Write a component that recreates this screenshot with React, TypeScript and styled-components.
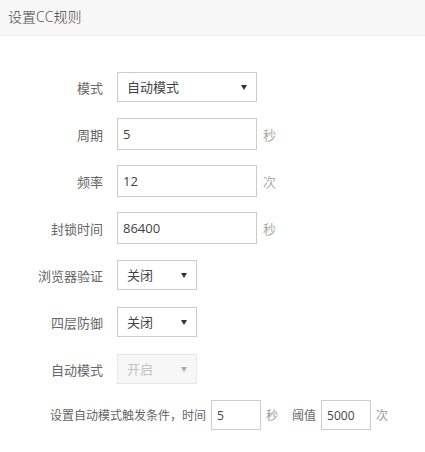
import { createGlobalStyle } from "styled-components";
import styled from "styled-components";

const GlobalStyle = createGlobalStyle`
  html, body {
    margin: 0;
    padding: 0;
    background: #fff;
  }
  body {
    font-family: "Open Sans", "Noto Sans CJK SC", sans-serif;
    color: #333;
  }
  * {
    box-sizing: border-box;
  }
`;

type Field =
  | { kind: "select"; label: string; value: string; wide?: boolean; disabled?: boolean }
  | { kind: "input"; label: string; value: string; unit: string };

const fields: Field[] = [
  { kind: "select", label: "模式", value: "自动模式", wide: true },
  { kind: "input", label: "周期", value: "5", unit: "秒" },
  { kind: "input", label: "频率", value: "12", unit: "次" },
  { kind: "input", label: "封锁时间", value: "86400", unit: "秒" },
  { kind: "select", label: "浏览器验证", value: "关闭" },
  { kind: "select", label: "四层防御", value: "关闭" },
  { kind: "select", label: "自动模式", value: "开启", disabled: true },
];

export default function App() {
  return (
    <Page>
      <GlobalStyle />
      <Header>
        <HeaderTitle>设置CC规则</HeaderTitle>
      </Header>

      <Form>
        {fields.map((f) => (
          <Row key={f.label}>
            <Label>{f.label}</Label>
            {f.kind === "select" ? (
              <SelectWrap $wide={f.wide}>
                <Select defaultValue={f.value} disabled={f.disabled}>
                  <option value={f.value}>{f.value}</option>
                </Select>
                <Arrow $disabled={f.disabled}>
                  <svg width="6" height="5" viewBox="0 0 6 5">
                    <path d="M0 0 L6 0 L3 5 Z" fill="currentColor" />
                  </svg>
                </Arrow>
              </SelectWrap>
            ) : (
              <>
                <TextInput defaultValue={f.value} />
                <Unit>{f.unit}</Unit>
              </>
            )}
          </Row>
        ))}

        <TriggerRow>
          <TriggerText>设置自动模式触发条件，时间</TriggerText>
          <SmallInput defaultValue="5" />
          <TriggerText $muted>秒</TriggerText>
          <TriggerText $gap>阈值</TriggerText>
          <SmallInput defaultValue="5000" />
          <TriggerText $muted>次</TriggerText>
        </TriggerRow>
      </Form>
    </Page>
  );
}

const fontStack = `"Open Sans", "Noto Sans CJK SC", sans-serif`;

const Page = styled.div`
  width: 425px;
  min-height: 452px;
  background: #fff;
`;

const Header = styled.div`
  height: 36px;
  padding: 0 8px;
  display: flex;
  align-items: center;
  background: #f7f7f7;
  border-bottom: 1px solid #ececec;
`;

const HeaderTitle = styled.div`
  font-size: 14px;
  font-weight: 300;
  color: #444;
  padding-bottom: 3px;
`;

const Form = styled.div`
  padding-top: 35px;
  display: flex;
  flex-direction: column;
  gap: 15px;
`;

const Row = styled.div`
  height: 32px;
  display: grid;
  grid-template-columns: 103px auto auto 1fr;
  column-gap: 14px;
  align-items: center;
`;

const Label = styled.div`
  font-size: 13px;
  color: #666;
  text-align: right;
`;

const SelectWrap = styled.div<{ $wide?: boolean }>`
  position: relative;
  width: ${(p) => (p.$wide ? "140px" : "80px")};
  height: 30px;
`;

const Select = styled.select`
  appearance: none;
  -webkit-appearance: none;
  width: 100%;
  height: 100%;
  padding: 0 20px 0 9px;
  border: 1px solid #ccc;
  border-radius: 0;
  background: #fff;
  font-family: ${fontStack};
  font-size: 13px;
  color: #444;
  outline: none;

  &:disabled {
    background: #f5f5f5;
    color: #aaa;
    border-color: #ddd;
  }
`;

const Arrow = styled.span<{ $disabled?: boolean }>`
  position: absolute;
  right: 10px;
  top: 13px;
  display: flex;
  pointer-events: none;
  color: ${(p) => (p.$disabled ? "#aaa" : "#333")};
`;

const TextInput = styled.input`
  width: 140px;
  height: 32px;
  padding: 0 5px;
  border: 1px solid #ccc;
  font-family: ${fontStack};
  font-size: 13px;
  color: #444;
  outline: none;
`;

const Unit = styled.span`
  margin-left: -8px;
  font-size: 13px;
  color: #aaa;
`;

const TriggerRow = styled.div`
  height: 30px;
  padding-left: 50px;
  display: flex;
  align-items: center;
  gap: 5px;
`;

const TriggerText = styled.span<{ $muted?: boolean; $gap?: boolean }>`
  font-size: 12px;
  color: ${(p) => (p.$muted ? "#999" : "#666")};
  margin-left: ${(p) => (p.$gap ? "9px" : "0")};
`;

const SmallInput = styled.input`
  width: 50px;
  height: 30px;
  padding: 0 5px;
  border: 1px solid #ccc;
  font-family: ${fontStack};
  font-size: 12px;
  color: #444;
  outline: none;
`;
